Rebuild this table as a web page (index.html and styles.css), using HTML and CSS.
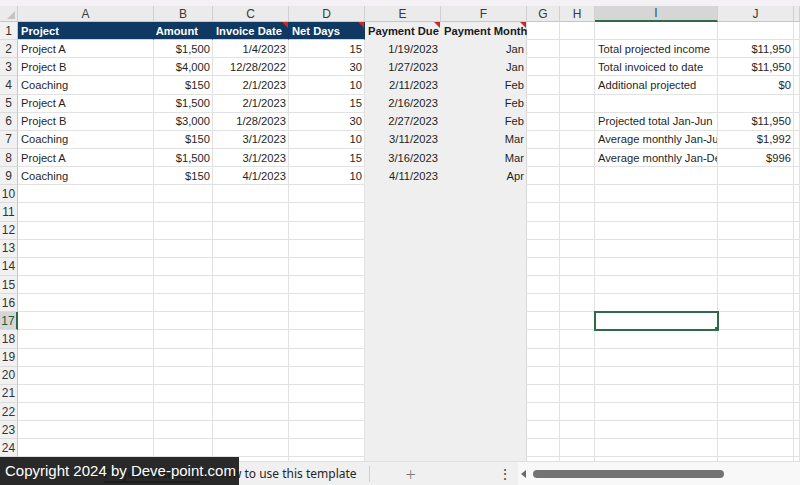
FILE: index.html
```html
<!DOCTYPE html>
<html>
<head>
<meta charset="utf-8">
<title>Projected Income</title>
<link rel="stylesheet" href="styles.css">
</head>
<body>
<div class="app">
  <div class="topstrip"></div>
  <div class="sheet">
    <div class="r hdr"><span class="corner"></span><span>A</span><span>B</span><span>C</span><span>D</span><span>E</span><span>F</span><span>G</span><span>H</span><span class="sel">I</span><span>J</span><span></span></div>
    <div class="r"><span class="rh">1</span><span class="th">Project</span><span class="th amt">Amount</span><span class="th note">Invoice Date</span><span class="th note">Net Days</span><span class="tg note">Payment Due</span><span class="tg note">Payment Month</span><span></span><span></span><span></span><span></span><span></span></div>
    <div class="r"><span class="rh">2</span><span>Project A</span><span class="n">$1,500</span><span class="n">1/4/2023</span><span class="n">15</span><span class="n">1/19/2023</span><span class="n">Jan</span><span></span><span></span><span>Total projected income</span><span class="n">$11,950</span><span></span></div>
    <div class="r"><span class="rh">3</span><span>Project B</span><span class="n">$4,000</span><span class="n">12/28/2022</span><span class="n">30</span><span class="n">1/27/2023</span><span class="n">Jan</span><span></span><span></span><span>Total invoiced to date</span><span class="n">$11,950</span><span></span></div>
    <div class="r"><span class="rh">4</span><span>Coaching</span><span class="n">$150</span><span class="n">2/1/2023</span><span class="n">10</span><span class="n">2/11/2023</span><span class="n">Feb</span><span></span><span></span><span>Additional projected</span><span class="n">$0</span><span></span></div>
    <div class="r"><span class="rh">5</span><span>Project A</span><span class="n">$1,500</span><span class="n">2/1/2023</span><span class="n">15</span><span class="n">2/16/2023</span><span class="n">Feb</span><span></span><span></span><span></span><span></span><span></span></div>
    <div class="r"><span class="rh">6</span><span>Project B</span><span class="n">$3,000</span><span class="n">1/28/2023</span><span class="n">30</span><span class="n">2/27/2023</span><span class="n">Feb</span><span></span><span></span><span>Projected total Jan-Jun</span><span class="n">$11,950</span><span></span></div>
    <div class="r"><span class="rh">7</span><span>Coaching</span><span class="n">$150</span><span class="n">3/1/2023</span><span class="n">10</span><span class="n">3/11/2023</span><span class="n">Mar</span><span></span><span></span><span>Average monthly Jan-Jun</span><span class="n">$1,992</span><span></span></div>
    <div class="r"><span class="rh">8</span><span>Project A</span><span class="n">$1,500</span><span class="n">3/1/2023</span><span class="n">15</span><span class="n">3/16/2023</span><span class="n">Mar</span><span></span><span></span><span>Average monthly Jan-Dec</span><span class="n">$996</span><span></span></div>
    <div class="r"><span class="rh">9</span><span>Coaching</span><span class="n">$150</span><span class="n">4/1/2023</span><span class="n">10</span><span class="n">4/11/2023</span><span class="n">Apr</span><span></span><span></span><span></span><span></span><span></span></div>
    <div class="r"><span class="rh">10</span><span></span><span></span><span></span><span></span><span></span><span></span><span></span><span></span><span></span><span></span><span></span></div>
    <div class="r"><span class="rh">11</span><span></span><span></span><span></span><span></span><span></span><span></span><span></span><span></span><span></span><span></span><span></span></div>
    <div class="r"><span class="rh">12</span><span></span><span></span><span></span><span></span><span></span><span></span><span></span><span></span><span></span><span></span><span></span></div>
    <div class="r"><span class="rh">13</span><span></span><span></span><span></span><span></span><span></span><span></span><span></span><span></span><span></span><span></span><span></span></div>
    <div class="r"><span class="rh">14</span><span></span><span></span><span></span><span></span><span></span><span></span><span></span><span></span><span></span><span></span><span></span></div>
    <div class="r"><span class="rh">15</span><span></span><span></span><span></span><span></span><span></span><span></span><span></span><span></span><span></span><span></span><span></span></div>
    <div class="r"><span class="rh">16</span><span></span><span></span><span></span><span></span><span></span><span></span><span></span><span></span><span></span><span></span><span></span></div>
    <div class="r"><span class="rh selrow">17</span><span></span><span></span><span></span><span></span><span></span><span></span><span></span><span></span><span class="active"></span><span></span><span></span></div>
    <div class="r"><span class="rh">18</span><span></span><span></span><span></span><span></span><span></span><span></span><span></span><span></span><span></span><span></span><span></span></div>
    <div class="r"><span class="rh">19</span><span></span><span></span><span></span><span></span><span></span><span></span><span></span><span></span><span></span><span></span><span></span></div>
    <div class="r"><span class="rh">20</span><span></span><span></span><span></span><span></span><span></span><span></span><span></span><span></span><span></span><span></span><span></span></div>
    <div class="r"><span class="rh">21</span><span></span><span></span><span></span><span></span><span></span><span></span><span></span><span></span><span></span><span></span><span></span></div>
    <div class="r"><span class="rh">22</span><span></span><span></span><span></span><span></span><span></span><span></span><span></span><span></span><span></span><span></span><span></span></div>
    <div class="r"><span class="rh">23</span><span></span><span></span><span></span><span></span><span></span><span></span><span></span><span></span><span></span><span></span><span></span></div>
    <div class="r"><span class="rh">24</span><span></span><span></span><span></span><span></span><span></span><span></span><span></span><span></span><span></span><span></span><span></span></div>
    <div class="r"><span class="rh">25</span><span></span><span></span><span></span><span></span><span></span><span></span><span></span><span></span><span></span><span></span><span></span></div>
  </div>
  <div class="tabbar">
    <div class="tabs">
      <div class="tab current">Projected Income</div>
      <div class="tab">How to use this template</div>
      <div class="tabsep"></div>
      <div class="addtab">+</div>
      <div class="more">⋮</div>
    </div>
    <div class="hscroll">
      <svg class="arrow" width="6" height="8" viewBox="0 0 6 8"><path d="M5 0 L0 4 L5 8 Z" fill="#6a6a6a"/></svg>
      <div class="thumb"></div>
    </div>
  </div>
  <div class="copyright">Copyright 2024 by Deve-point.com</div>
</div>
</body>
</html>
```

FILE: styles.css
```css
* { box-sizing: border-box; }
html, body { margin: 0; padding: 0; }
body {
  width: 800px;
  height: 485px;
  overflow: hidden;
  background: #ffffff;
  font-family: "Liberation Sans", Arial, sans-serif;
  color: #1f1f1f;
}
.app {
  position: relative;
  width: 800px;
  height: 485px;
  display: flex;
  flex-direction: column;
}
.topstrip {
  height: 6px;
  background: #f3f1f3;
  flex: none;
}
.sheet {
  flex: 1;
  min-height: 0;
  overflow: hidden;
  display: grid;
  grid-template-columns: 18px 136px 59px 76px 76px 76px 86px 33px 35px 123px 76px 1fr;
  grid-template-rows: 16px;
  grid-auto-rows: 18.15px;
  background: #ffffff;
}
.r { display: contents; }
.r > span {
  position: relative;
  display: flex;
  align-items: center;
  padding: 0 2px 0 3px;
  font-size: 11.2px;
  white-space: nowrap;
  border-right: 1px solid #e2e2e2;
  border-bottom: 1px solid #e2e2e2;
  min-width: 0;
}
.r > span.n { justify-content: flex-end; }
.r > :nth-child(10) { overflow: hidden; }

/* column header row */
.hdr > span {
  background: #ebebeb;
  justify-content: center;
  padding: 0;
  font-size: 12px;
  color: #3a3a3a;
  border-right: 1px solid #d0d0d0;
  border-bottom: 1px solid #c6c6c6;
}
.hdr > span.sel {
  background: #d6d6d6;
  color: #1d5a3a;
  border-bottom: 2px solid #2f6b4b;
}
.hdr > .corner { background: #ebebeb; }
.corner::after {
  content: "";
  position: absolute;
  right: 2px;
  bottom: 2px;
  border-style: solid;
  border-width: 0 0 8px 8px;
  border-color: transparent transparent #c4c4c4 transparent;
}

/* row headers */
.r > span.rh {
  background: #f1f1f1;
  justify-content: center;
  padding: 0;
  font-size: 12px;
  color: #333333;
  border-right: 1px solid #c6c6c6;
  border-bottom: 1px solid #dcdcdc;
}
.r > span.rh.selrow {
  background: #d6d6d6;
  color: #1d5a3a;
  border-right: 2px solid #2f6b4b;
}

/* shaded columns E and F */
.r:not(.hdr) > :nth-child(6),
.r:not(.hdr) > :nth-child(7) {
  background: #efefef;
  border-color: #efefef;
}
.r:not(.hdr) > :nth-child(7) { border-right-color: #d9d9d9; }

/* table header cells */
.r > span.th {
  background: #0f3963;
  color: #ffffff;
  font-weight: bold;
  border-color: #0f3963;
  border-bottom-color: #d4d4d4;
}
.r > span.th.amt { justify-content: flex-end; padding-right: 14px; }
.r > span.tg {
  font-weight: bold;
  color: #1a1a1a;
  overflow: visible;
  z-index: 1;
}
.note::after {
  content: "";
  position: absolute;
  top: 0;
  right: 0;
  border-style: solid;
  border-width: 0 6px 6px 0;
  border-color: transparent #d0262b transparent transparent;
}

/* active cell */
.r > span.active {
  outline: 2px solid #2f6b4b;
  outline-offset: -1px;
  z-index: 2;
}
.active::after {
  content: "";
  position: absolute;
  right: -4px;
  bottom: -4px;
  width: 5px;
  height: 5px;
  background: #2f6b4b;
  border: 1px solid #ffffff;
}

/* bottom tab bar */
.tabbar {
  flex: none;
  height: 24px;
  display: flex;
  background: #f0f0f0;
  border-top: 1px solid #e0e0e0;
  font-family: "Noto Sans", "Liberation Sans", sans-serif;
  font-size: 12px;
  color: #262626;
}
.tabs {
  width: 518px;
  display: flex;
  align-items: center;
}
.tab {
  position: relative;
  height: 100%;
  display: flex;
  align-items: center;
  white-space: nowrap;
}
.tab.current {
  margin-left: 104px;
  width: 109px;
  font-weight: 600;
}
.tab.current::after {
  content: "";
  position: absolute;
  left: 0;
  width: 96px;
  bottom: 2px;
  height: 2px;
  background: #2b2b2b;
}
.tab + .tab { margin-left: 3px; }
.tabsep {
  width: 1px;
  height: 16px;
  background: #cfcfcf;
  margin-left: 12px;
}
.addtab {
  margin-left: 36px;
  font-size: 18px;
  font-weight: 300;
  color: #7a7a7a;
}
.more {
  margin-left: 82px;
  font-size: 14px;
  color: #444;
}
.hscroll {
  flex: 1;
  display: flex;
  align-items: center;
  background: #f8f8f8;
  padding-left: 3px;
}
.arrow { flex: none; }
.thumb {
  margin-left: 6px;
  width: 191px;
  height: 8px;
  border-radius: 4px;
  background: #737373;
}

/* watermark overlay */
.copyright {
  position: absolute;
  left: 0;
  bottom: 0;
  width: 239px;
  height: 28px;
  background: rgba(28, 28, 28, 0.94);
  color: #ffffff;
  font-family: "Liberation Sans", Arial, sans-serif;
  font-size: 15px;
  line-height: 28px;
  padding-left: 5px;
  white-space: nowrap;
}
```
